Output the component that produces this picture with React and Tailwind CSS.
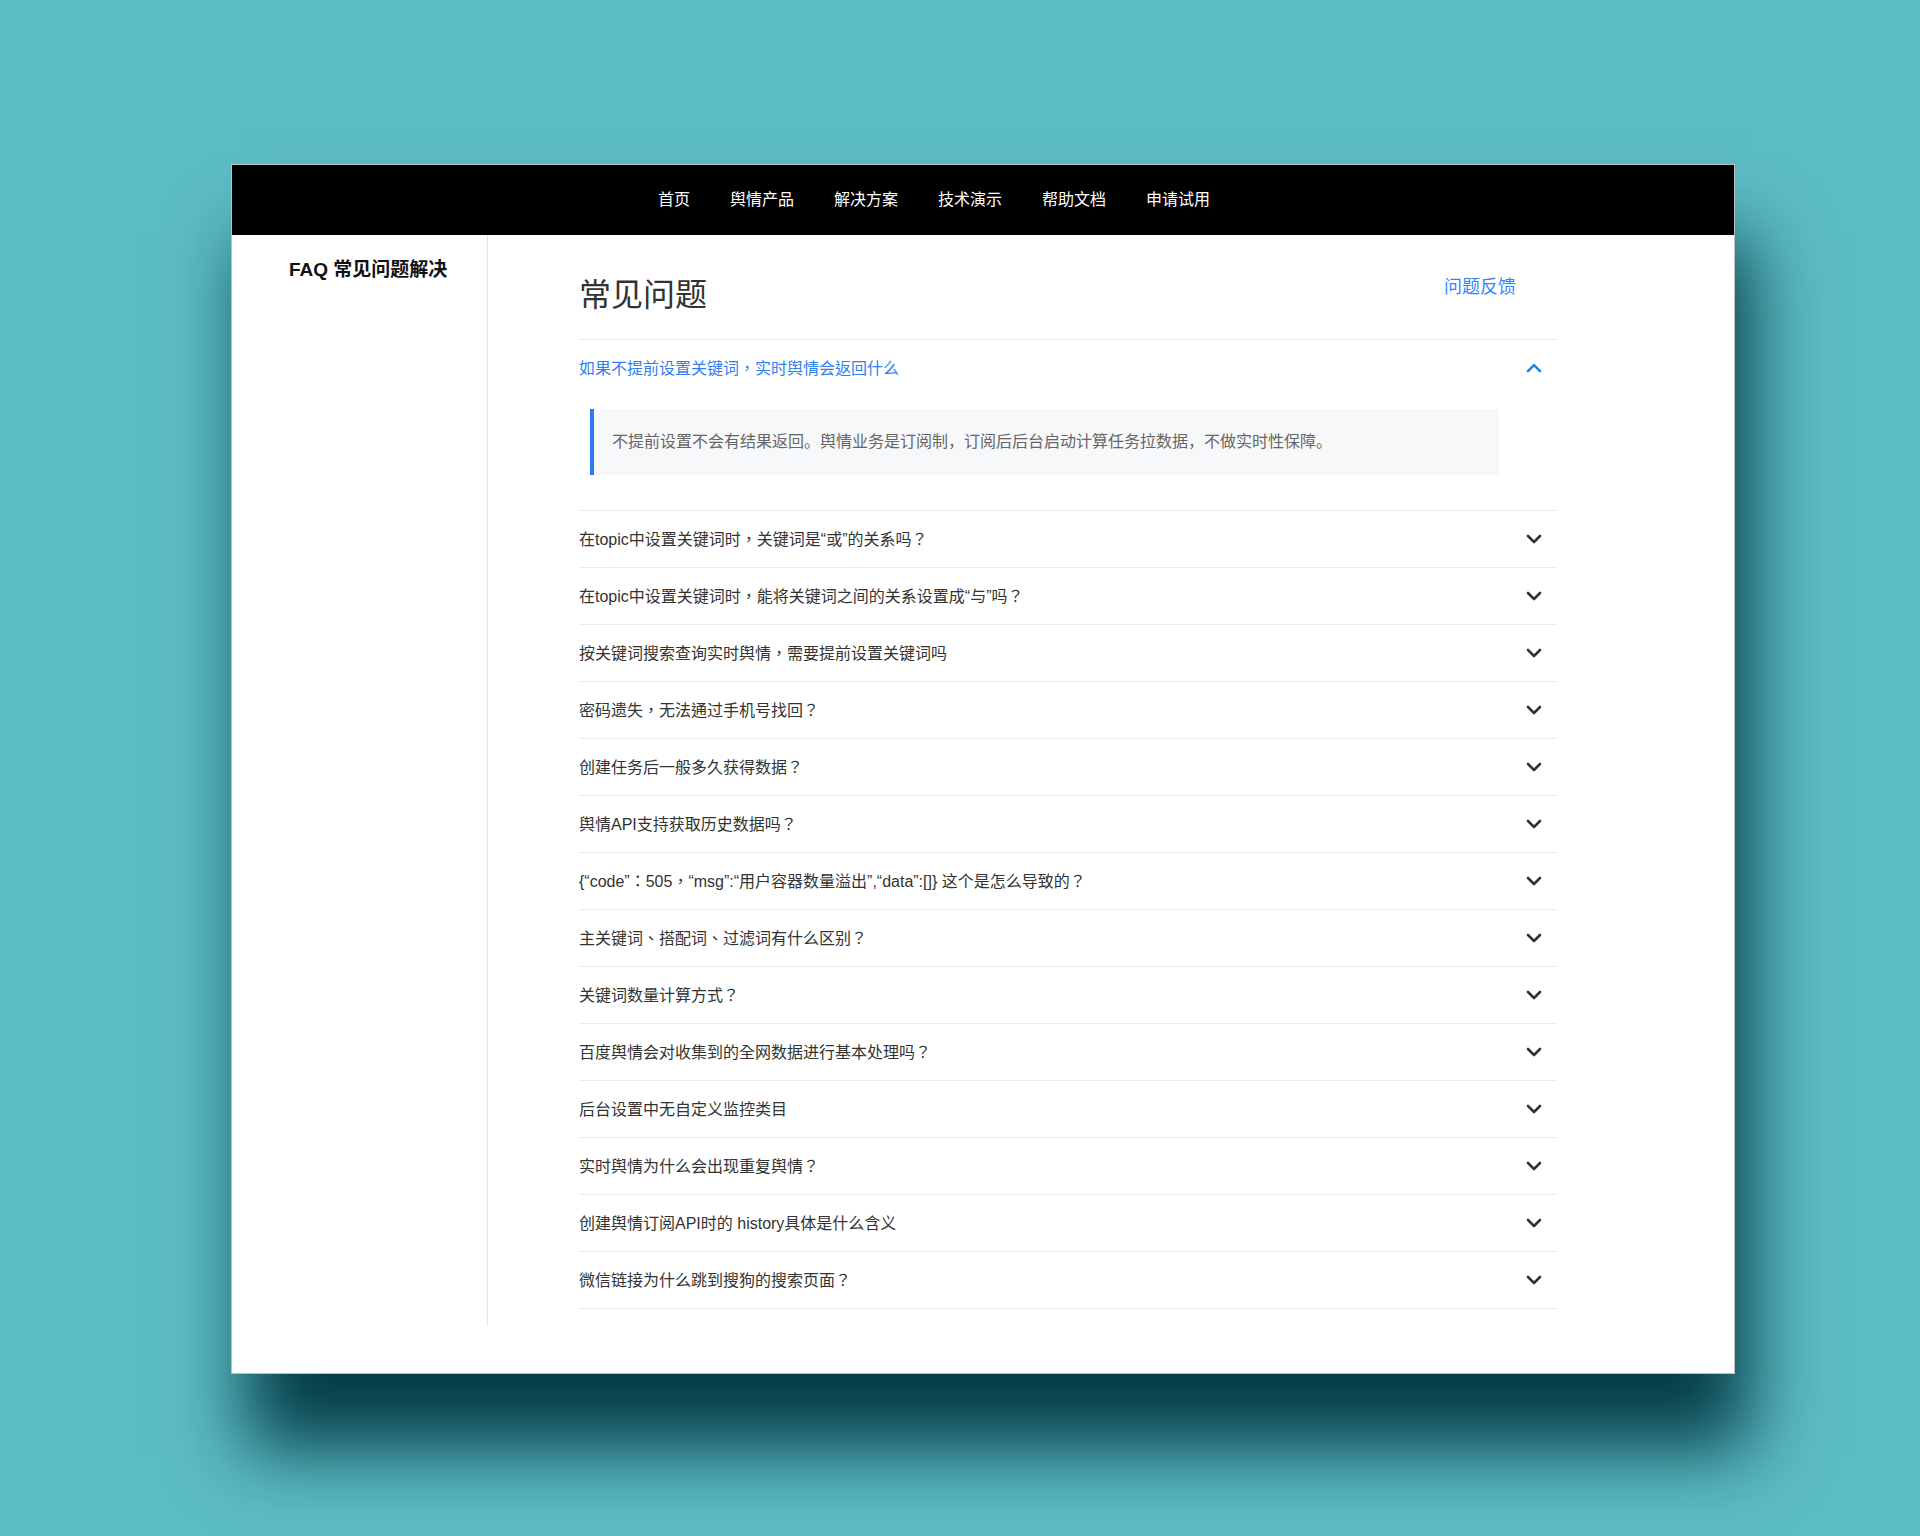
import React from "react";

const questions = [
  "在topic中设置关键词时，关键词是“或”的关系吗？",
  "在topic中设置关键词时，能将关键词之间的关系设置成“与”吗？",
  "按关键词搜索查询实时舆情，需要提前设置关键词吗",
  "密码遗失，无法通过手机号找回？",
  "创建任务后一般多久获得数据？",
  "舆情API支持获取历史数据吗？",
  "{“code”：505，“msg”:“用户容器数量溢出”,“data”:[]} 这个是怎么导致的？",
  "主关键词、搭配词、过滤词有什么区别？",
  "关键词数量计算方式？",
  "百度舆情会对收集到的全网数据进行基本处理吗？",
  "后台设置中无自定义监控类目",
  "实时舆情为什么会出现重复舆情？",
  "创建舆情订阅API时的 history具体是什么含义",
  "微信链接为什么跳到搜狗的搜索页面？",
];

const nav = ["首页", "舆情产品", "解决方案", "技术演示", "帮助文档", "申请试用"];

function Chevron({ up = false, className = "" }) {
  return (
    <svg width="16" height="10" viewBox="0 0 16 10" className={className}>
      <path
        d={up ? "M2 8.2 L8 2.2 L14 8.2" : "M2 2 L8 8 L14 2"}
        fill="none"
        stroke="currentColor"
        strokeWidth="2.6"
        strokeLinecap="round"
        strokeLinejoin="round"
      />
    </svg>
  );
}

const tc = { fontFamily: '"Liberation Sans", "Noto Sans CJK TC", sans-serif' };

export default function App() {
  return (
    <div
      className="w-[1920px] h-[1536px] bg-[#5cbcc5] pt-[164px] pl-[231px] overflow-hidden"
      style={{ fontFamily: '"Liberation Sans", "Noto Sans CJK SC", sans-serif' }}
    >
      <div className="w-[1504px] h-[1210px] bg-white border border-black/25 shadow-[15px_75px_70px_rgba(0,55,65,0.95)] flex flex-col">
        {/* Navbar */}
        <div className="h-[70px] bg-black flex items-center pl-[426px] gap-10 text-white text-[16px] leading-[20px]">
          {nav.map((n) => (
            <span key={n}>{n}</span>
          ))}
        </div>

        {/* Body */}
        <div className="flex">
          <div className="w-[256px] border-r border-[#e6e6e6] pt-[22px] pl-[57px]">
            <div className="text-[19px] leading-[26px] font-bold text-[#111]">FAQ 常见问题解决</div>
          </div>

          <div className="pl-[91px] pt-[40px] pb-[17px]">
            <div className="w-[978px]">
              <div className="flex justify-between items-start pb-[24px] border-b border-[#ebebeb]">
                <h1 className="text-[32px] leading-[40px] text-[#333] font-normal">常见问题</h1>
                <a className="text-[18px] leading-[24px] text-[#3385ff] mr-[41px]">问题反馈</a>
              </div>

              <div className="border-b border-[#ebebeb]">
                <div className="h-[56px] flex items-center justify-between pr-[15px]">
                  <span className="text-[16px] text-[#2f7ff2] pt-[2px]" style={tc}>
                    如果不提前设置关键词，实时舆情会返回什么
                  </span>
                  <Chevron up className="text-[#1f86e0]" />
                </div>
                <div className="mt-[13px] mb-[35px] ml-[11px] mr-[58px] h-[66px] bg-[#f7f8fa] border-l-4 border-[#2b7cf2] pl-[18px] flex items-center">
                  <span className="text-[16px] text-[#666]">
                    不提前设置不会有结果返回。舆情业务是订阅制，订阅后后台启动计算任务拉数据，不做实时性保障。
                  </span>
                </div>
              </div>

              {questions.map((q) => (
                <div
                  key={q}
                  className="h-[57px] border-b border-[#ebebeb] flex items-center justify-between pr-[15px]"
                >
                  <span className="text-[16px] text-[#333] pt-[2px]" style={tc}>
                    {q}
                  </span>
                  <Chevron className="text-[#333]" />
                </div>
              ))}
            </div>
          </div>
        </div>
      </div>
    </div>
  );
}
